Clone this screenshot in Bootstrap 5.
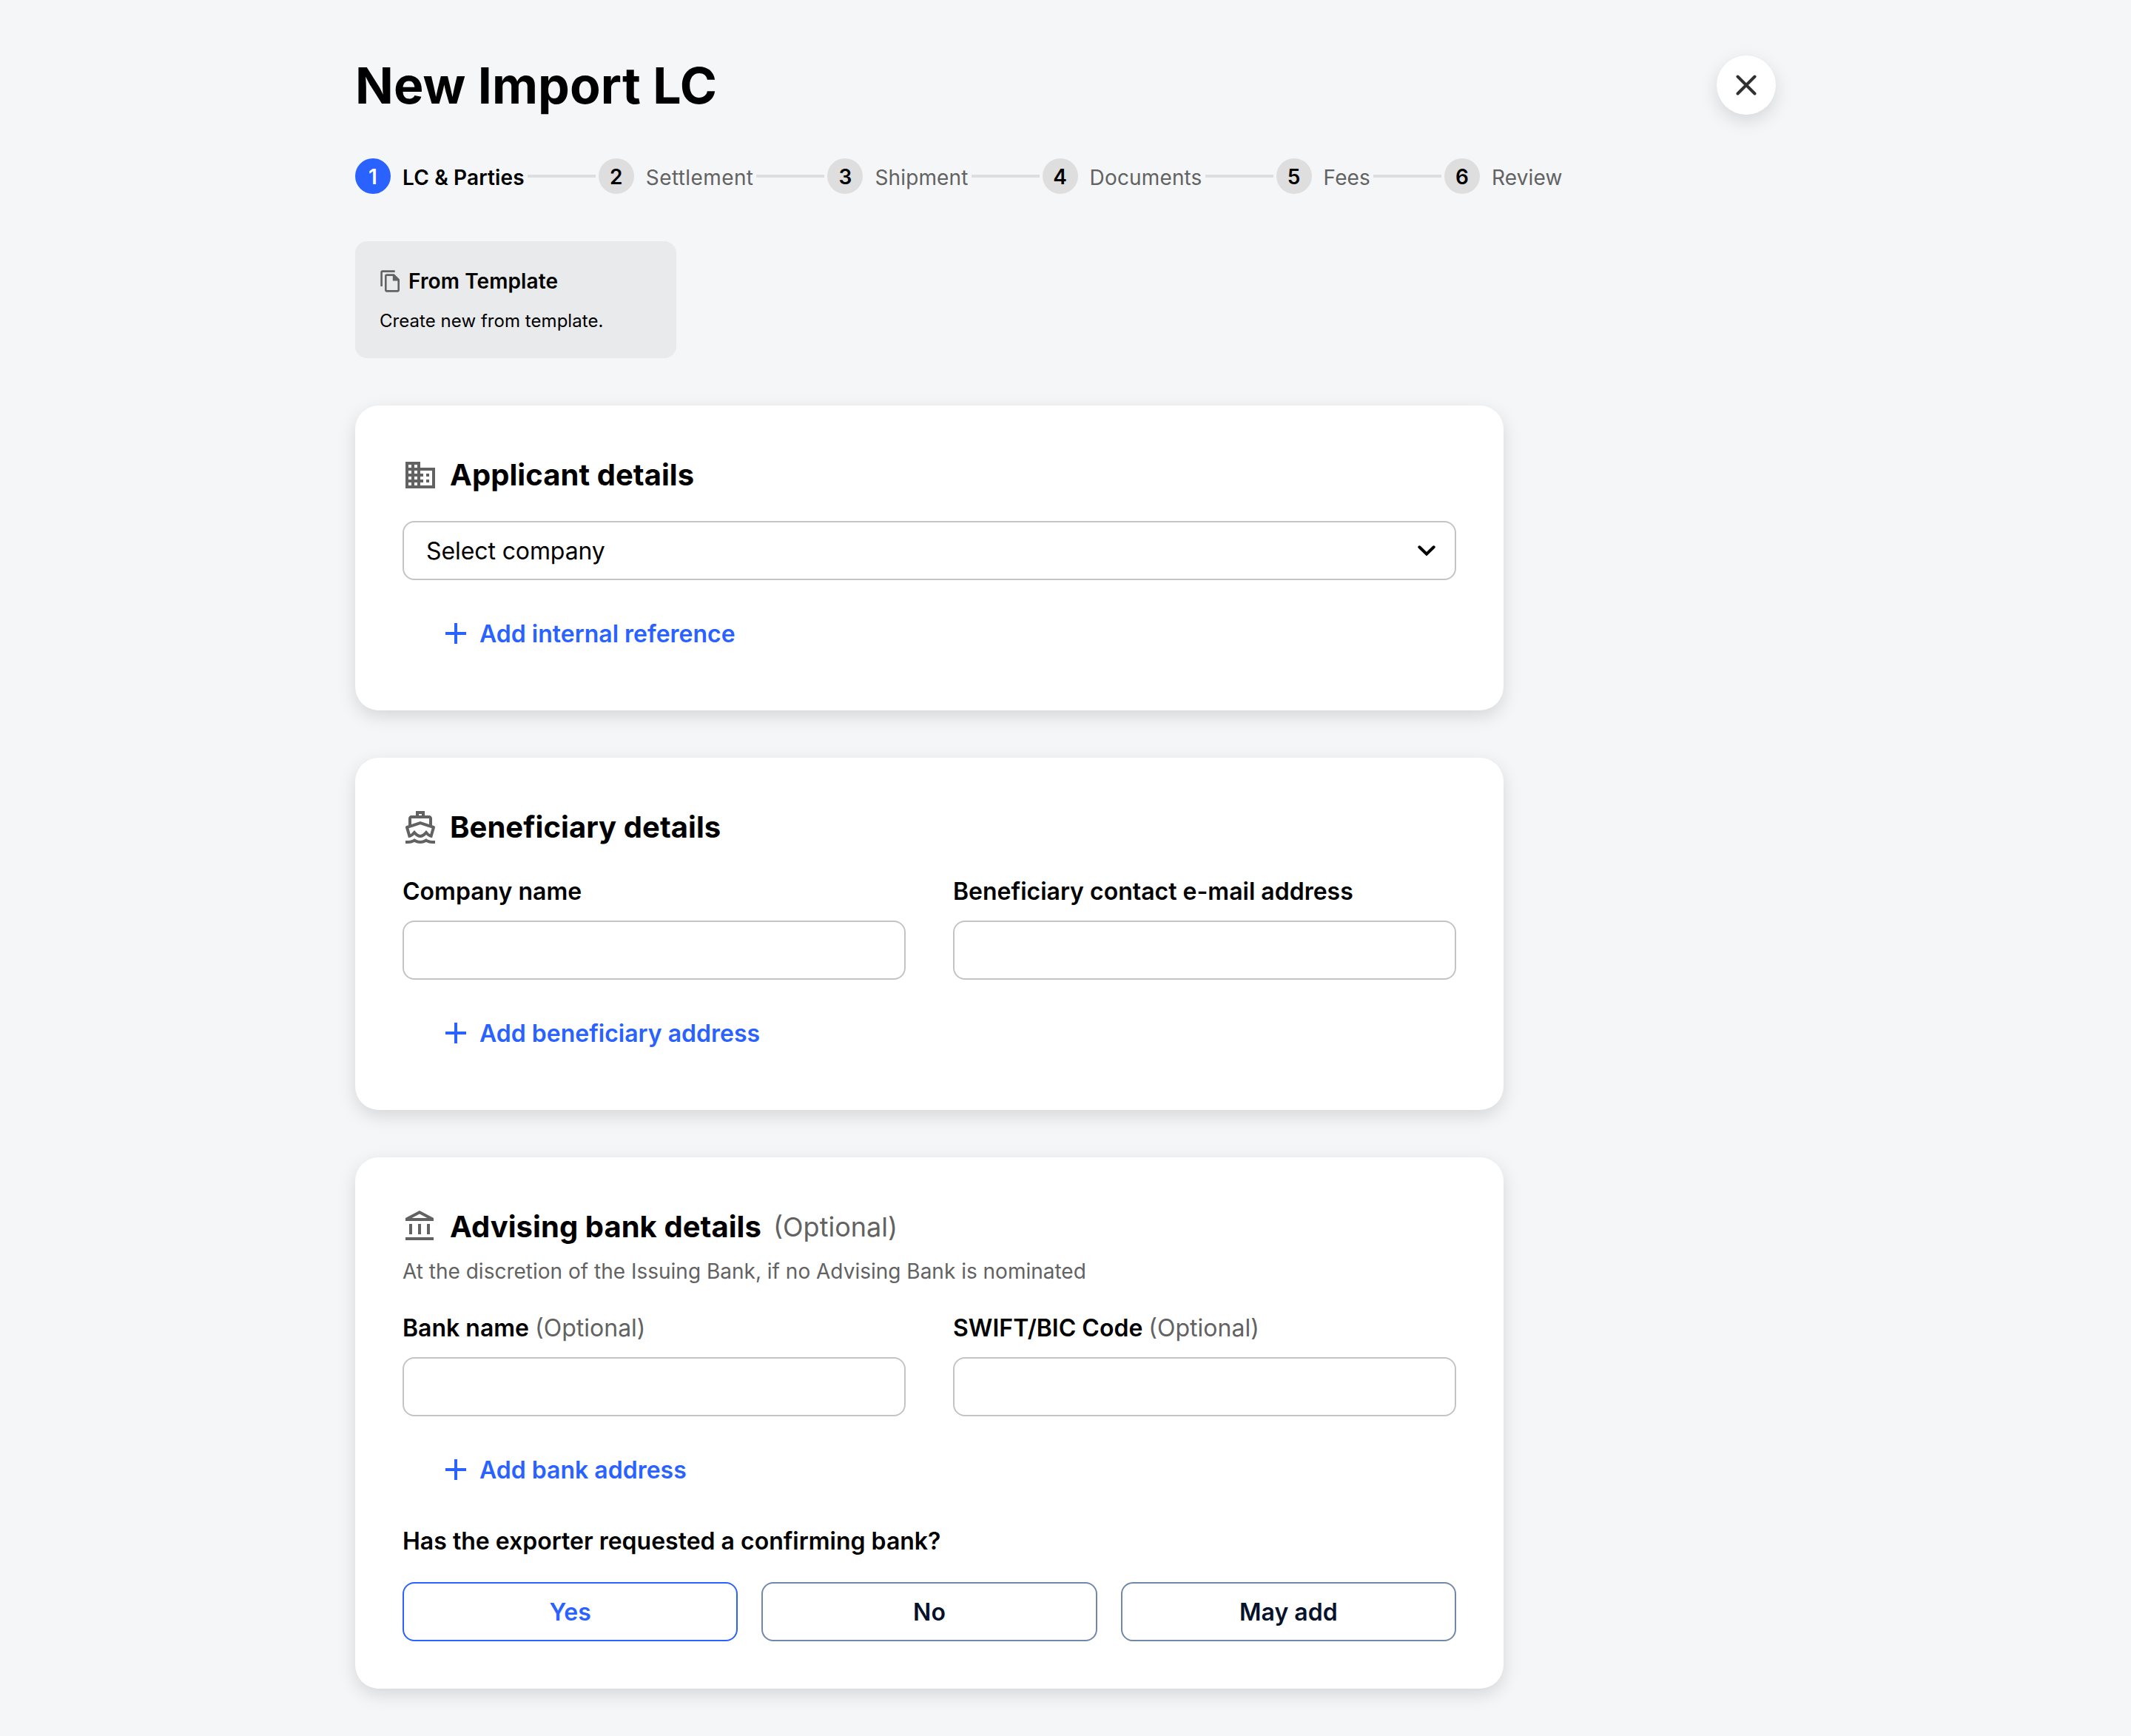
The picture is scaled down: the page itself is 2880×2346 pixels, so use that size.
<!DOCTYPE html>
<html lang="en">
<head>
<meta charset="utf-8">
<title>New Import LC</title>
<link href="https://cdn.jsdelivr.net/npm/bootstrap@5.3.0/dist/css/bootstrap.min.css" rel="stylesheet">
<style>
body{background:#f4f6f8;font-family:Inter,sans-serif;color:#000;font-size:32px;line-height:48px}
.page-wrap{width:1920px;height:2346px;padding-top:75px}
h1{font-size:68px;line-height:80px;font-weight:700;letter-spacing:.1px}
.close-btn{width:80px;height:80px;background:#fff;box-shadow:0 8px 24px rgba(0,0,0,.13);border:0;padding:0}
.stepper{margin-top:59px;height:48px;font-size:28px;line-height:48px;color:#626262}
.step-dot{width:48px;height:48px;background:#dedede;color:#000;font-weight:600;margin-right:16px;padding-top:1px}
.step-label{padding-top:2px;letter-spacing:.15px}
.step-label.wide{letter-spacing:.4px}
.step-item{height:48px}
.step-item.active{color:#000;font-weight:600}
.step-item.active .step-dot{background:#2962ff;color:#fff}
.step-line{width:92px;height:4px;background:#dedede;margin:0 4px}
.template-box{width:434px;height:158px;margin-top:64px;border-radius:16px;background:#e9eaeb;padding:32px;text-align:left;border:0;color:#000}
.template-title{font-size:28px;line-height:42px;font-weight:600;letter-spacing:.1px}
.template-text{font-size:24px;line-height:36px;margin-top:15px;letter-spacing:.05px;padding-left:1px}
.panel{width:1552px;margin-top:64px;border:0;border-radius:32px;padding:64px;box-shadow:0 8px 24px rgba(0,0,0,.13);background:#fff;color:#000}
.panel-head{height:60px;gap:16px}
.panel-head svg{fill:#626262}
h2{font-size:40px;line-height:60px;font-weight:700;letter-spacing:.05px}
.opt{color:#626262;font-weight:400}
.panel-head .opt{font-size:36px}
.field{height:80px;border:2px solid #c4c4c4;border-radius:16px;padding:0 26px 0 30px;font-size:32px;background:#fff;color:#000}
.field span{padding-top:2px;letter-spacing:-.1px}
.panel-body-row{margin-top:32px}
.after-hint{margin-top:31px}
.lbl{font-weight:600;line-height:48px;padding-top:1px;margin-bottom:15px}
.question{margin-bottom:31px}
.add-link{color:#2962ff;font-weight:600;margin:48px 0 0 52px;height:48px;text-decoration:none;gap:12px}
.add-link span{padding-top:2px}
.hint{font-size:28px;line-height:42px;color:#626262;margin-top:9px}
.choice{height:80px;border:2px solid #7088aa;border-radius:16px;font-size:32px;font-weight:600;color:#06122b;background:#fff;padding:1px 0 0}
.choice.on{border-color:#2962ff;color:#2962ff}
.two{gap:64px}
.three{gap:32px}
</style>
<script src="https://cdn.jsdelivr.net/npm/bootstrap@5.3.0/dist/js/bootstrap.bundle.min.js"></script>
</head>
<body>
<main class="page-wrap mx-auto">
<header class="d-flex justify-content-between align-items-center">
<h1 class="mb-0">New Import LC</h1>
<button class="close-btn rounded-circle d-flex align-items-center justify-content-center" aria-label="Close"><svg width="28" height="28" viewBox="0 0 28 28"><path d="M2.500 2.500l23 23M25.500 2.500l-23 23" stroke="#313131" stroke-width="4" stroke-linecap="round"/></svg></button>
</header>
<nav class="stepper d-flex align-items-center text-nowrap">
<div class="step-item active d-flex"><span class="step-dot rounded-circle text-center">1</span><span class="step-label">LC &amp; Parties</span></div><i class="step-line"></i>
<div class="step-item d-flex"><span class="step-dot rounded-circle text-center">2</span><span class="step-label wide">Settlement</span></div><i class="step-line"></i>
<div class="step-item d-flex"><span class="step-dot rounded-circle text-center">3</span><span class="step-label">Shipment</span></div><i class="step-line"></i>
<div class="step-item d-flex"><span class="step-dot rounded-circle text-center">4</span><span class="step-label">Documents</span></div><i class="step-line"></i>
<div class="step-item d-flex"><span class="step-dot rounded-circle text-center">5</span><span class="step-label">Fees</span></div><i class="step-line"></i>
<div class="step-item d-flex"><span class="step-dot rounded-circle text-center">6</span><span class="step-label">Review</span></div>
</nav>
<button class="template-box d-block">
<div class="template-title d-flex align-items-center gap-2"><svg width="32" height="32" viewBox="0 0 32 32"><path d="M21.700 2.600H5a1.400 1.400 0 0 0-1.400 1.400V23" fill="none" stroke="#626262" stroke-width="2.600"/><path d="M10.800 7.600H20.200L26.700 14.100V27.900a1.500 1.500 0 0 1-1.500 1.500H10.800a1.500 1.500 0 0 1-1.500-1.500V9.100a1.500 1.500 0 0 1 1.500-1.500z" fill="none" stroke="#626262" stroke-width="2.600"/><path d="M18.800 7v8.600H27.500z" fill="#626262"/></svg><span>From Template</span></div>
<div class="template-text">Create new from template.</div>
</button>

<section class="panel card" style="height:412px">
<div class="panel-head d-flex align-items-center"><svg width="48" height="48" viewBox="0 0 24 24"><path d="M12 7V3H2v18h20V7H12zM6 19H4v-2h2v2zm0-4H4v-2h2v2zm0-4H4V9h2v2zm0-4H4V5h2v2zm4 12H8v-2h2v2zm0-4H8v-2h2v2zm0-4H8V9h2v2zm0-4H8V5h2v2zm10 12h-8v-2h2v-2h-2v-2h2v-2h-2V9h8v10zm-2-8h-2v2h2v-2zm0 4h-2v2h2v-2z"/></svg><h2 class="mb-0">Applicant details</h2></div>
<div class="field panel-body-row d-flex align-items-center justify-content-between"><span>Select company</span><svg width="24" height="14" viewBox="0 0 24 14"><path d="M2.300 2.300L12 11.700l9.700-9.400" fill="none" stroke="#000" stroke-width="4" stroke-linecap="round"/></svg></div>
<a href="#" class="add-link d-flex align-items-center"><svg width="40" height="40" viewBox="0 0 40 40"><path d="M6 20h28M20 6v28" stroke="#2962ff" stroke-width="4"/></svg><span>Add internal reference</span></a>
</section>

<section class="panel card" style="height:476px">
<div class="panel-head d-flex align-items-center"><svg width="48" height="48" viewBox="0 0 24 24"><path d="M13 3v1h-2V3h2m-1 7.110l5.380 1.770 2.390.780-1.120 3.970c-.54-.3-.94-.71-1.140-.94L16 13.960l-1.510 1.720c-.34.4-1.280 1.320-2.490 1.320s-2.150-.92-2.490-1.320L8 13.960l-1.510 1.720c-.2.230-.6.630-1.140.93l-1.130-3.960 2.400-.79L12 10.110M15 1H9v3H6c-1.100 0-2 .9-2 2v4.620l-1.290.42c-.26.080-.48.260-.6.5s-.15.520-.06.780L3.950 19H4c1.600 0 3.020-.88 4-2 .98 1.120 2.400 2 4 2s3.020-.88 4-2c.98 1.120 2.400 2 4 2h.050l1.890-6.680c.080-.26.060-.54-.060-.78s-.34-.42-.6-.5L20 10.620V6c0-1.100-.9-2-2-2h-3V1zM6 9.970V6h12v3.970L12 8 6 9.970zM20 21c-1.390 0-2.780-.47-4-1.320-2.440 1.710-5.560 1.710-8 0C6.780 20.530 5.390 21 4 21H2v2h2c1.380 0 2.740-.35 4-.99 2.520 1.290 5.480 1.290 8 0 1.260.65 2.620.99 4 .99h2v-2h-2z"/></svg><h2 class="mb-0">Beneficiary details</h2></div>
<div class="d-flex two panel-body-row">
<div class="col"><div class="lbl">Company name</div><div class="field"></div></div>
<div class="col"><div class="lbl">Beneficiary contact e-mail address</div><div class="field"></div></div>
</div>
<a href="#" class="add-link d-flex align-items-center"><svg width="40" height="40" viewBox="0 0 40 40"><path d="M6 20h28M20 6v28" stroke="#2962ff" stroke-width="4"/></svg><span>Add beneficiary address</span></a>
</section>

<section class="panel card" style="height:718px">
<div class="panel-head d-flex align-items-center"><svg width="48" height="48" viewBox="0 0 24 24"><path d="M6.500 10h-2v7h2v-7zm6 0h-2v7h2v-7zm8.500 9H2v2h19v-2zm-2.500-9h-2v7h2v-7zm-7-6.740L16.710 6H6.290l5.210-2.740m0-2.260L2 6v2h19V6l-9.500-5z"/></svg><h2 class="mb-0">Advising bank details</h2><span class="opt">(Optional)</span></div>
<div class="hint">At the discretion of the Issuing Bank, if no Advising Bank is nominated</div>
<div class="d-flex two after-hint">
<div class="col"><div class="lbl">Bank name <span class="opt">(Optional)</span></div><div class="field"></div></div>
<div class="col"><div class="lbl">SWIFT/BIC Code <span class="opt">(Optional)</span></div><div class="field"></div></div>
</div>
<a href="#" class="add-link d-flex align-items-center"><svg width="40" height="40" viewBox="0 0 40 40"><path d="M6 20h28M20 6v28" stroke="#2962ff" stroke-width="4"/></svg><span>Add bank address</span></a>
<div class="lbl question mt-auto">Has the exporter requested a confirming bank?</div>
<div class="row g-0 flex-nowrap three">
<button class="choice on col btn">Yes</button><button class="choice col btn">No</button><button class="choice col btn">May add</button>
</div>
</section>
</main>
</body>
</html>
